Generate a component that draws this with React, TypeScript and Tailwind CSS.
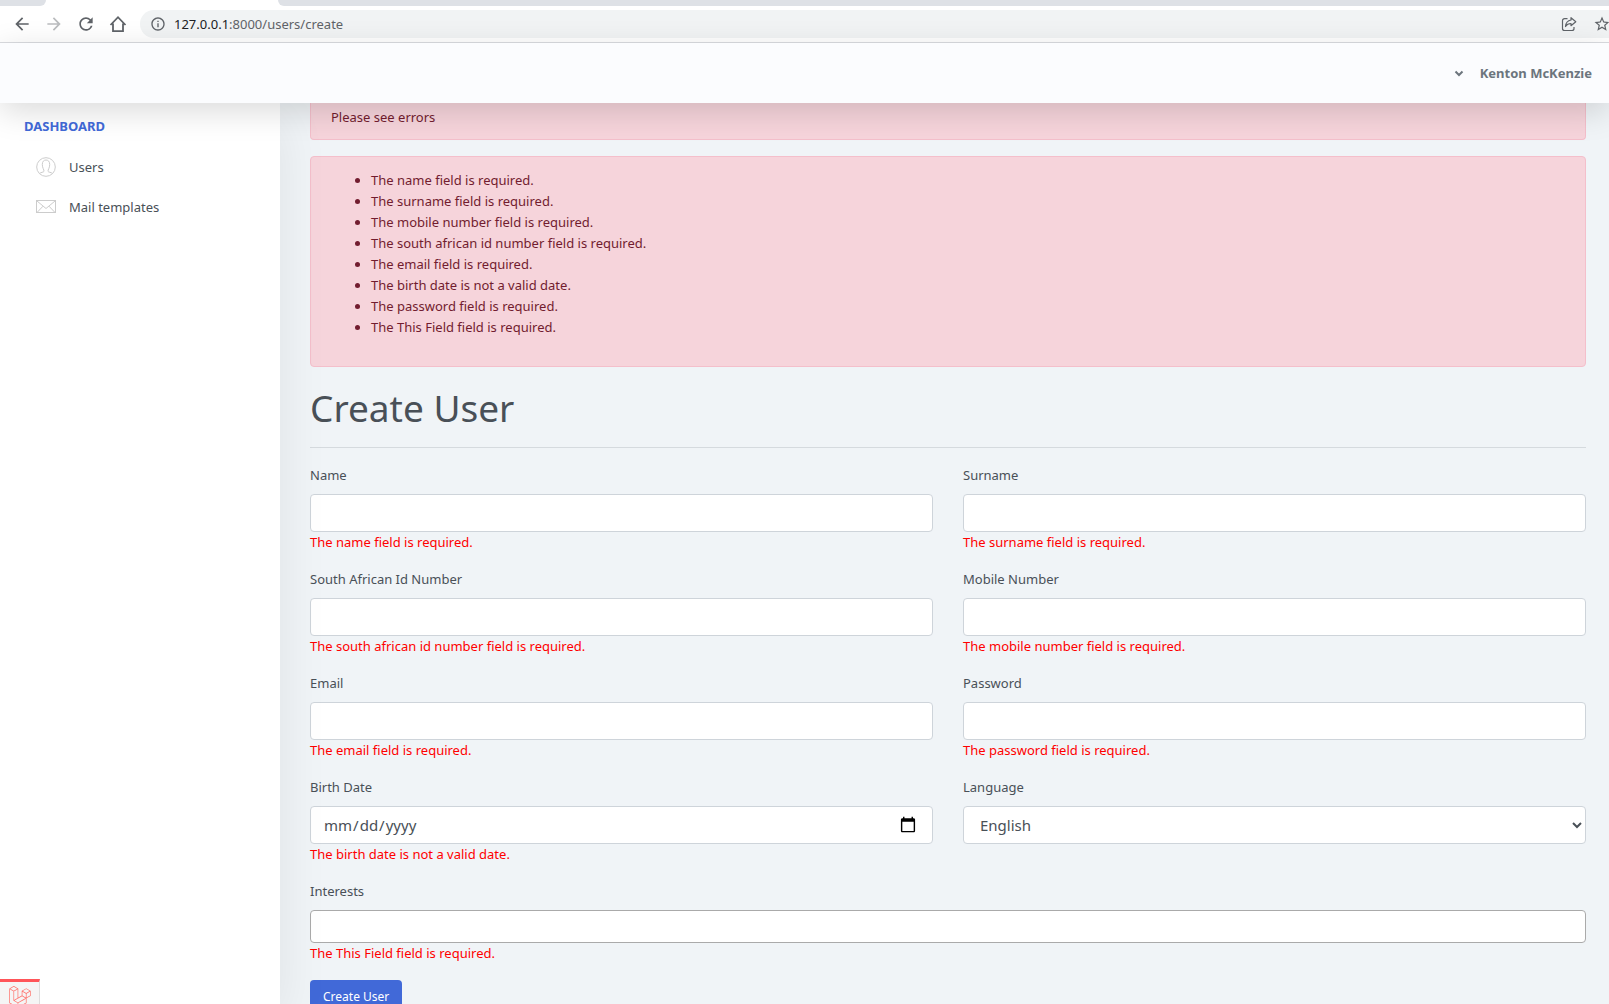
import React from "react";
import { MdArrowBack, MdArrowForward, MdRefresh, MdInfoOutline, MdStarBorder } from "react-icons/md";
import { FaLaravel } from "react-icons/fa";

const errors = [
  "The name field is required.",
  "The surname field is required.",
  "The mobile number field is required.",
  "The south african id number field is required.",
  "The email field is required.",
  "The birth date is not a valid date.",
  "The password field is required.",
  "The This Field field is required.",
];

function HomeIcon() {
  return (
    <svg className="h-5 w-5" viewBox="0 0 20 20" fill="none" stroke="currentColor" strokeWidth="1.8">
      <path d="M2.500 11 10 3.200 17.500 11M5 9.500V17.100H15V9.500" />
    </svg>
  );
}

function ShareIcon() {
  return (
    <svg className="h-4 w-4" viewBox="0 0 16 16" fill="none" stroke="currentColor" strokeWidth="1.2" strokeLinejoin="round">
      <path d="M6.500 2.700H3.500A2 2 0 0 0 1.500 4.700V12.500A2 2 0 0 0 3.500 14.500H11A2 2 0 0 0 13 12.500V11" />
      <path d="M10 1.700 14.800 5.700 10 9.700V7.500C7.500 7.500 5.800 8.300 4.500 10.500 4.800 7 6.800 4.500 10 4Z" />
    </svg>
  );
}

function UserIcon() {
  return (
    <svg className="h-5 w-5" viewBox="0 0 20 20" fill="none" stroke="currentColor">
      <circle cx="10" cy="10" r="9.300" />
      <path d="M3.500 16.500C4.500 15.300 7.800 15.300 8 14.300 8.200 12.800 6.300 11 6.300 7.500 6.300 4.500 7.800 3 10 3S13.700 4.500 13.700 7.500C13.700 11 11.800 12.800 12 14.300 12.200 15.300 15.500 15.300 16.500 16.500" />
    </svg>
  );
}

function MailIcon() {
  return (
    <svg className="h-5 w-5" viewBox="0 0 20 20" fill="none" stroke="currentColor">
      <rect x="0.500" y="3.500" width="19" height="12" />
      <path d="M1 4 10 11.500 19 4M1 15.500 7 9.200M19 15.500 13 9.200" />
    </svg>
  );
}

function BrowserBar() {
  return (
    <div className="border-b border-[#dadce0] bg-white text-[#5f6368]">
      <div className="flex h-1.5">
        <div className="w-[46px] rounded-br-lg bg-[#dee1e6]" />
        <div className="w-[232px]" />
        <div className="flex-1 rounded-bl-lg bg-[#dee1e6]" />
      </div>
      <div className="flex h-9 items-center pl-3">
        <div className="flex gap-3">
          <button aria-label="Back"><MdArrowBack size={20} /></button>
          <button aria-label="Forward" className="text-[#babcbe]"><MdArrowForward size={20} /></button>
          <button aria-label="Reload"><MdRefresh size={20} /></button>
          <button aria-label="Home"><HomeIcon /></button>
        </div>
        <div className="ml-3 flex h-7 flex-1 items-center rounded-l-full bg-[#f1f3f4] pl-2.5">
          <MdInfoOutline size={16} />
          <div className="ml-2 flex-1">
            <span className="text-[#202124]">127.0.0.1</span>:8000/users/create
          </div>
          <button aria-label="Share" className="mr-4"><ShareIcon /></button>
          <button aria-label="Bookmark" className="-mr-0.5 shrink-0"><MdStarBorder size={18} /></button>
        </div>
      </div>
    </div>
  );
}

const control = "block h-[38px] w-full rounded border border-[#ced4da] bg-white px-3 text-[15px] text-[#495057]";

function Field({ id, label, error, children }: { id: string; label: string; error?: string; children?: React.ReactNode }) {
  return (
    <div className="mb-4">
      <label htmlFor={id} className="mb-2 block">{label}</label>
      {children ?? <input id={id} type="text" className={control} />}
      {error && <span className="block text-[#ff0000]">{error}</span>}
    </div>
  );
}

export default function App() {
  return (
    <div className="relative flex h-screen flex-col overflow-hidden bg-[#f0f4f7] font-['Noto_Sans',sans-serif] text-[13px] leading-[21px] text-[#495057]">
      <BrowserBar />
      <header className="relative z-20 flex h-[60px] shrink-0 items-center justify-end bg-[#fbfcfe] pr-[17px] shadow-[0_8px_32px_rgba(0,0,0,0.15)]">
        <button className="flex items-center gap-4 font-bold text-[#6c757d]">
          <svg className="h-2.5 w-2.5" viewBox="0 0 10 10" fill="none" stroke="currentColor" strokeWidth="2">
            <path d="M1.500 3.500 5 7 8.500 3.500" />
          </svg>
          Kenton McKenzie
        </button>
      </header>
      <div className="flex min-h-0 flex-1">
        <nav className="relative z-10 w-[280px] shrink-0 bg-white px-6 pt-[13px] shadow-[0_16px_48px_rgba(0,0,0,0.08)]">
          <a href="#dashboard" className="font-bold text-[#4169d8]">DASHBOARD</a>
          <a href="#users" className="mt-5 ml-3 flex h-5 items-center gap-[13px]">
            <span className="text-[#cccccc]"><UserIcon /></span>Users
          </a>
          <a href="#mail" className="mt-5 ml-3 flex h-5 items-center gap-[13px]">
            <span className="text-[#cccccc]"><MailIcon /></span>Mail templates
          </a>
        </nav>
        <main className="min-w-0 flex-1 pr-[23px] pl-[30px]">
          <div className="rounded-b border border-t-0 border-[#f4bfcb] bg-[#f6d4db] px-5 pt-1 pb-[11px] text-[#721c2f]">
            Please see errors
          </div>
          <div className="mt-4 rounded border border-[#f4bfcb] bg-[#f6d4db] px-5 pt-[13px] pb-7 text-[#721c2f]">
            <ul className="list-disc pl-10">
              {errors.map((e) => <li key={e}>{e}</li>)}
            </ul>
          </div>
          <h1 className="mt-[17px] border-b border-[#d5dade] pb-[15px] text-[37px] leading-12">Create User</h1>
          <form className="pt-[17px]">
            <div className="grid grid-cols-2 gap-x-[30px]">
              <Field id="name" label="Name" error="The name field is required." />
              <Field id="surname" label="Surname" error="The surname field is required." />
              <Field id="idnumber" label="South African Id Number" error="The south african id number field is required." />
              <Field id="mobile" label="Mobile Number" error="The mobile number field is required." />
              <Field id="email" label="Email" error="The email field is required." />
              <Field id="password" label="Password" error="The password field is required.">
                <input id="password" type="password" className={control} />
              </Field>
              <Field id="birth" label="Birth Date" error="The birth date is not a valid date.">
                <input id="birth" type="date" className={`${control} [&::-webkit-calendar-picker-indicator]:h-[18px] [&::-webkit-calendar-picker-indicator]:w-[18px] [&::-webkit-calendar-picker-indicator]:p-0 [&::-webkit-calendar-picker-indicator]:mr-[3px]`} />
              </Field>
              <Field id="language" label="Language">
                <select id="language" className={control}>
                  <option>English</option>
                </select>
              </Field>
            </div>
            <Field id="interests" label="Interests" error="The This Field field is required.">
              <input id="interests" type="text" className="block h-[33px] w-full rounded border border-[#aaaaaa] bg-white px-2" />
            </Field>
            <button type="button" className="flex h-[34px] items-center rounded bg-[#4169d8] px-[13px] text-xs text-white">Create User</button>
          </form>
        </main>
      </div>
      <button aria-label="Debug bar" className="absolute bottom-0 left-0 z-30 flex h-[25px] w-10 justify-center border-t-3 border-r border-t-[#ff5559] border-r-[#dddddd] bg-[#f5f5f5] pt-1 text-[#ff6f68]">
        <FaLaravel size={22} />
      </button>
    </div>
  );
}
